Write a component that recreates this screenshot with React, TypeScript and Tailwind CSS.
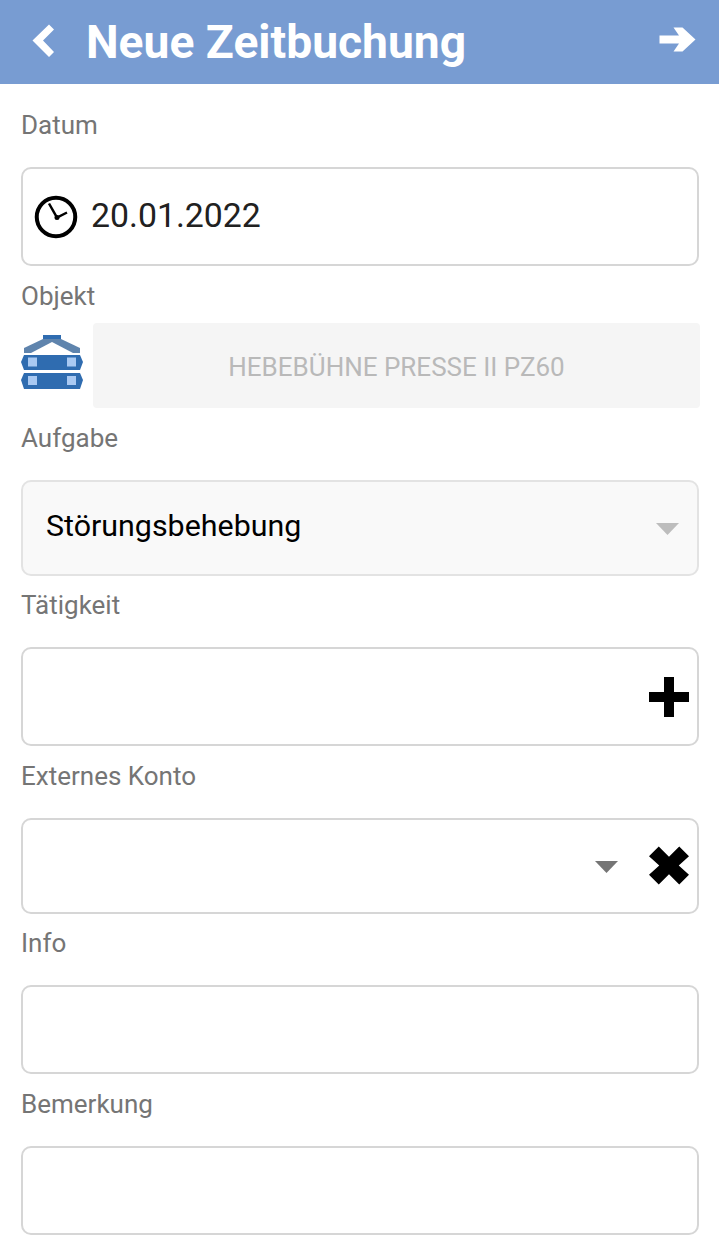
import React from 'react';

function Label({ text, className }: { text: string; className: string }) {
  return <div className={`pl-[21px] text-[26px] leading-[32px] text-[#757575] ${className}`}>{text}</div>;
}

function Caret({ color }: { color: string }) {
  return (
    <svg width="23" height="12" viewBox="0 0 23 12">
      <path d="M0 0H23L11.5 12Z" fill={color} />
    </svg>
  );
}

export default function App() {
  return (
    <div className="w-[719px] h-[1244px] overflow-hidden bg-white font-['Roboto',sans-serif]">
      {/* Header */}
      <div className="h-[84px] bg-[#789cd2] flex items-center pl-[32px] pr-[23px]">
        <svg width="23" height="34" viewBox="0 0 23 34" className="mb-[3px]">
          <path d="M22 5.5L17 0.5L0.5 16.5L17 33L22 28L11 16.5Z" fill="#fff" />
        </svg>
        <div className="ml-[31px] text-[46.2px] leading-[54px] font-bold text-white">Neue Zeitbuchung</div>
        <svg width="37" height="25" viewBox="0 0 37 25" className="ml-auto mb-[5px]">
          <path d="M0.5 8.5H20L14.5 0.5H23.5L36.5 12.5L23.5 24.5H14.5L20 16.5H0.5Z" fill="#fff" />
        </svg>
      </div>

      <Label text="Datum" className="pt-[25px] h-[83px]" />
      <div className="mx-[21px] w-[678px] h-[99px] border-2 border-[#d6d6d6] rounded-[10px] flex items-center pl-[11px]">
        <svg width="44" height="44" viewBox="0 0 44 44">
          <circle cx="22" cy="22" r="19.25" fill="none" stroke="#000" strokeWidth="4" />
          <path d="M15 8.5L23 22.5L33 17.5" fill="none" stroke="#000" strokeWidth="2.5" />
          <circle cx="23" cy="22.5" r="2.5" fill="#000" />
        </svg>
        <div className="ml-[13px] mb-[2px] text-[33.8px] leading-[40px] text-[#212121]">20.01.2022</div>
      </div>

      <Label text="Objekt" className="pt-[14px] h-[57px]" />
      <div className="flex pl-[21px] h-[85px]">
        <svg width="63" height="55" viewBox="0 0 63 55" className="mt-[12px] blur-[0.7px]">
          <rect x="22" y="0" width="18" height="7" fill="#2f6cb0" />
          <path d="M3 18V13L22 4H40L59 13V18Z" fill="#5f84ad" />
          <path d="M10 18L31 7L52 18Z" fill="#fff" />
          <path d="M3 20H59L62 27L59 35H3L0 27Z" fill="#2f6cb0" />
          <rect x="7" y="22.5" width="9" height="9" fill="#a9c9f2" />
          <rect x="46" y="22.5" width="9" height="9" fill="#a9c9f2" />
          <path d="M3 38H59L62 45L59 54H3L0 45Z" fill="#2f6cb0" />
          <rect x="7" y="41" width="9" height="9" fill="#a9c9f2" />
          <rect x="46" y="41" width="9" height="9" fill="#a9c9f2" />
        </svg>
        <div className="ml-[9px] w-[607px] h-[85px] pt-[4px] rounded-[4px] bg-[#f5f5f5] flex items-center justify-center text-[26px] text-[#b9b9b9]">
          HEBEBÜHNE PRESSE II PZ60
        </div>
      </div>

      <Label text="Aufgabe" className="pt-[14px] h-[72px]" />
      <div className="mx-[21px] w-[678px] h-[96px] border-2 border-[#e3e3e3] rounded-[10px] bg-[#f9f9f9] flex items-center pl-[23px] pr-[18px]">
        <div className="mb-[4px] text-[30.4px] leading-[38px] text-black">Störungsbehebung</div>
        <div className="ml-auto mt-[2px] flex"><Caret color="#bdbdbd" /></div>
      </div>

      <Label text="Tätigkeit" className="pt-[13px] h-[71px]" />
      <div className="mx-[21px] w-[678px] h-[99px] border-2 border-[#d6d6d6] rounded-[10px] flex items-center justify-end pr-[8px]">
        <svg width="40" height="40" viewBox="0 0 40 40">
          <path d="M15 0H25V15H40V25H25V40H15V25H0V15H15Z" fill="#000" />
        </svg>
      </div>

      <Label text="Externes Konto" className="pt-[14px] h-[72px]" />
      <div className="mx-[21px] w-[678px] h-[96px] border-2 border-[#d6d6d6] rounded-[10px] flex items-center justify-end pr-[8px]">
        <div className="mr-[31px] mt-[2px] flex"><Caret color="#757575" /></div>
        <svg width="40" height="39" viewBox="0 0 41 39" className="mb-[2px]">
          <path d="M10 0L20.5 10.5L31 0L41 10L30.5 19.5L41 29L31 39L20.5 28.5L10 39L0 29L10.5 19.5L0 10Z" fill="#000" />
        </svg>
      </div>

      <Label text="Info" className="pt-[13px] h-[71px]" />
      <div className="mx-[21px] w-[678px] h-[89px] border-2 border-[#d6d6d6] rounded-[10px]" />

      <Label text="Bemerkung" className="pt-[14px] h-[72px]" />
      <div className="mx-[21px] w-[678px] h-[89px] border-2 border-[#d6d6d6] rounded-[10px]" />
    </div>
  );
}
